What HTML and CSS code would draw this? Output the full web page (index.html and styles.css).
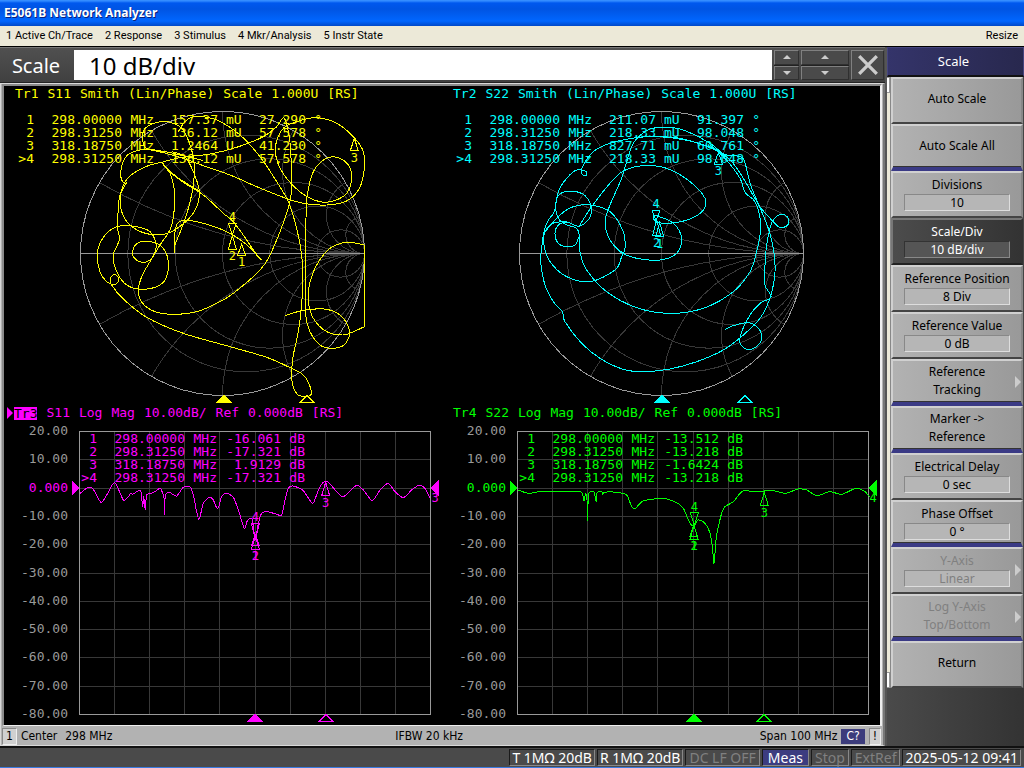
FILE: index.html
```html
<!DOCTYPE html>
<html lang="en">
<head>
<meta charset="utf-8">
<title>E5061B Network Analyzer</title>
<link rel="stylesheet" href="styles.css">
</head>
<body>
<div class="app">
  <header class="titlebar"><h1>E5061B Network Analyzer</h1></header>
  <nav class="menubar">
    <button>1 Active Ch/Trace</button>
    <button>2 Response</button>
    <button>3 Stimulus</button>
    <button>4 Mkr/Analysis</button>
    <button>5 Instr State</button>
    <button class="resize">Resize</button>
  </nav>

  <div class="workspace">
    <main class="main">
      <form class="entry">
        <label for="entry-value">Scale</label>
        <input id="entry-value" type="text" value="10 dB/div">
        <div class="spinner">
          <button type="button" aria-label="Step up"><i class="up"></i></button>
          <button type="button" aria-label="Step down"><i class="down"></i></button>
        </div>
        <div class="spinner wide">
          <button type="button" aria-label="Large step up"><i class="up"></i></button>
          <button type="button" aria-label="Large step down"><i class="down"></i></button>
        </div>
        <button type="button" class="close" aria-label="Close">
          <svg viewBox="0 0 20 20"><path d="M2 2 L18 18 M18 2 L2 18"/></svg>
        </button>
      </form>

      <section class="channel">
        <div class="screen">
          <article class="trace yellow">
            <h2><span>Tr1</span> <span>S11</span> <span>Smith</span> <span>(Lin/Phase)</span> <span>Scale</span> <span>1.000U</span> <span>[RS]</span></h2>
            <div class="plot">
              <svg id="tr1" viewBox="0 0 438 303"></svg>
              <table class="markers polar">
                <tr><td>1</td><td>298.00000</td><td>MHz</td><td>157.37</td><td>mU</td><td>27.290</td><td>°</td></tr>
                <tr><td>2</td><td>298.31250</td><td>MHz</td><td>136.12</td><td>mU</td><td>57.578</td><td>°</td></tr>
                <tr><td>3</td><td>318.18750</td><td>MHz</td><td>1.2464</td><td>U</td><td>41.230</td><td>°</td></tr>
                <tr><td>&gt;4</td><td>298.31250</td><td>MHz</td><td>136.12</td><td>mU</td><td>57.578</td><td>°</td></tr>
              </table>
            </div>
          </article>
          <article class="trace cyan">
            <h2><span>Tr2</span> <span>S22</span> <span>Smith</span> <span>(Lin/Phase)</span> <span>Scale</span> <span>1.000U</span> <span>[RS]</span></h2>
            <div class="plot">
              <svg id="tr2" viewBox="0 0 438 303"></svg>
              <table class="markers polar">
                <tr><td>1</td><td>298.00000</td><td>MHz</td><td>211.07</td><td>mU</td><td>91.397</td><td>°</td></tr>
                <tr><td>2</td><td>298.31250</td><td>MHz</td><td>218.33</td><td>mU</td><td>98.048</td><td>°</td></tr>
                <tr><td>3</td><td>318.18750</td><td>MHz</td><td>827.71</td><td>mU</td><td>60.761</td><td>°</td></tr>
                <tr><td>&gt;4</td><td>298.31250</td><td>MHz</td><td>218.33</td><td>mU</td><td>98.048</td><td>°</td></tr>
              </table>
            </div>
          </article>
          <article class="trace magenta">
            <h2 class="active"><span>Tr3</span> <span>S11</span> <span>Log</span> <span>Mag</span> <span>10.00dB/</span> <span>Ref</span> <span>0.000dB</span> <span>[RS]</span></h2>
            <div class="plot">
              <svg id="tr3" viewBox="0 0 438 303"></svg>
              <table class="markers">
                <tr><td>1</td><td>298.00000</td><td>MHz</td><td>-16.061</td><td>dB</td></tr>
                <tr><td>2</td><td>298.31250</td><td>MHz</td><td>-17.321</td><td>dB</td></tr>
                <tr><td>3</td><td>318.18750</td><td>MHz</td><td>1.9129</td><td>dB</td></tr>
                <tr><td>&gt;4</td><td>298.31250</td><td>MHz</td><td>-17.321</td><td>dB</td></tr>
              </table>
            </div>
          </article>
          <article class="trace green">
            <h2><span>Tr4</span> <span>S22</span> <span>Log</span> <span>Mag</span> <span>10.00dB/</span> <span>Ref</span> <span>0.000dB</span> <span>[RS]</span></h2>
            <div class="plot">
              <svg id="tr4" viewBox="0 0 438 303"></svg>
              <table class="markers">
                <tr><td>1</td><td>298.00000</td><td>MHz</td><td>-13.512</td><td>dB</td></tr>
                <tr><td>2</td><td>298.31250</td><td>MHz</td><td>-13.218</td><td>dB</td></tr>
                <tr><td>3</td><td>318.18750</td><td>MHz</td><td>-1.6424</td><td>dB</td></tr>
                <tr><td>&gt;4</td><td>298.31250</td><td>MHz</td><td>-13.218</td><td>dB</td></tr>
              </table>
            </div>
          </article>
        </div>
        <div class="stimulus">
          <span class="chan">1</span>
          <span class="center"><span>Center</span><span>298 MHz</span></span>
          <span class="ifbw">IFBW 20 kHz</span>
          <span class="span">Span 100 MHz</span>
          <span class="cal">C?</span>
          <span class="chan">!</span>
        </div>
      </section>
    </main>

    <aside class="softkeys">
      <h2>Scale</h2>
      <div class="keyarea">
        <div class="scroller"><i></i><i></i></div>
        <div class="keys">
          <button>Auto Scale</button>
          <button class="sep">Auto Scale All</button>
          <button>Divisions<b>10</b></button>
          <button class="selected">Scale/Div<b>10 dB/div</b></button>
          <button>Reference Position<b>8 Div</b></button>
          <button>Reference Value<b>0 dB</b></button>
          <button class="sep more">Reference<br>Tracking</button>
          <button class="sep">Marker -&gt;<br>Reference</button>
          <button>Electrical Delay<b>0 sec</b></button>
          <button class="sep">Phase Offset<b>0 °</b></button>
          <button class="more" disabled>Y-Axis<b>Linear</b></button>
          <button class="sep more" disabled>Log Y-Axis<br>Top/Bottom</button>
          <button>Return</button>
        </div>
      </div>
    </aside>
  </div>

  <footer class="status">
    <span>T 1MΩ 20dB</span>
    <span>R 1MΩ 20dB</span>
    <span class="off">DC LF OFF</span>
    <span class="on">Meas</span>
    <span class="off">Stop</span>
    <span class="off">ExtRef</span>
    <span>2025-05-12 09:41</span>
  </footer>
</div>
<script src="plots.js"></script>
</body>
</html>
```

FILE: styles.css
```css
* { box-sizing: border-box; }
body {
  margin: 0;
  background: #404040;
  font-family: "DejaVu Sans Condensed", "DejaVu Sans", sans-serif;
}
button { font: inherit; color: inherit; border: 0; padding: 0; background: none; }
h1, h2 { margin: 0; font-weight: normal; }

.app { display: flex; flex-direction: column; min-height: 100vh; border-bottom: 2px solid #3a7ae0; }

.titlebar {
  height: 26px;
  padding: 0 4px;
  background: linear-gradient(#3a92ff 0, #2f88ff 1px, #0058ee 3px, #0054e3 9px, #0066ff 21px, #0048c8 26px);
}
.titlebar h1 {
  font: bold 12px/26px "Noto Sans", sans-serif;
  color: #fff;
  text-shadow: 1px 1px #0a1f7a;
}

.menubar {
  display: flex;
  gap: 12px;
  height: 20px;
  padding: 0 6px;
  background: #ece9d8;
  color: #000;
  font-family: Roboto, sans-serif;
  font-size: 11px;
  line-height: 18px;
}
.menubar .resize { margin-left: auto; }

.workspace { display: flex; flex: 1; border-top: 1px solid #000; background: #b2b2b2; }
.main { flex: 1; display: flex; flex-direction: column; min-width: 0; }

.entry {
  display: flex;
  gap: 2px;
  height: 36px;
  padding: 2px 1px 2px 0;
  border-top: 1px solid #777;
  border-bottom: 1px solid #222;
  background: linear-gradient(#505050, #404040);
}
.entry label { width: 72px; text-align: center; font-family: "Noto Sans", sans-serif; font-size: 20px; line-height: 32px; color: #fff; }
.entry input {
  flex: 1;
  min-width: 0;
  border: 0;
  padding: 0 15px;
  background: #fff;
  color: #000;
  font-family: "Noto Sans", sans-serif;
  font-size: 24px;
}
.spinner { display: flex; flex-direction: column; gap: 1px; width: 25px; background: #222; }
.spinner.wide { width: 48px; }
.spinner button, .close {
  flex: 1;
  display: flex;
  align-items: center;
  justify-content: center;
  border: 1px solid;
  border-color: #808080 #303030 #303030 #808080;
  background: #4a4a4a;
}
.spinner i { border: 4px solid transparent; }
.spinner .up { border-top: 0; border-bottom-color: #ccc; }
.spinner .down { border-bottom: 0; border-top-color: #ccc; }
.close { flex: 0 0 33px; }
.close svg { width: 22px; height: 22px; fill: none; stroke: #ccc; stroke-width: 3; }

.channel {
  flex: 1;
  display: flex;
  flex-direction: column;
  border: 1px solid #d8d8d8;
  border-right: 2px solid #777;
  background: #b2b2b2;
}
.screen {
  display: grid;
  grid-template-columns: 1fr 1fr;
  margin: 0 1px 0 1px;
  padding-bottom: 1px;
  border: 2px solid #8a8a8a;
  border-bottom: 1px solid #eee;
  border-right: 2px solid #eee;
  background: #000;
  font-family: "DejaVu Sans Mono", monospace;
  font-size: 13px;
}
.yellow { color: #ff0; }
.cyan { color: #0ff; }
.magenta { color: #f0f; }
.green { color: #0f0; }
.trace h2 { display: flex; gap: 9px; height: 16px; padding-left: 11px; font-size: 13px; line-height: 16px; white-space: nowrap; }
.trace h2.active { padding-left: 3px; }
.trace h2.active::before { content: ""; align-self: center; margin-right: -8px; border: 6px solid transparent; border-left-color: #f0f; border-right: 0; }
.trace h2.active span:first-child { height: 13px; margin-top: 2px; line-height: 13px; background: #f0f; color: #000; }
.plot { position: relative; }
.plot svg { display: block; width: 100%; height: auto; shape-rendering: crispEdges; fill: none; stroke-width: 1; }
.plot svg text { stroke: none; fill: currentColor; font-size: 12px; text-anchor: middle; }
.plot svg text.scale { fill: #999; font-size: 13px; text-anchor: end; }
.plot svg text.ref { fill: currentColor; }
.plot .grid { stroke: #383838; }
.plot .frame { stroke: #999; }
.plot .line { stroke: currentColor; }
.plot .solid { stroke: currentColor; fill: currentColor; }

.markers { position: absolute; top: 11px; left: 74px; border-collapse: collapse; line-height: 13px; font-size: 13px; }
.markers.polar { left: 11px; }
.markers td { padding: 0; width: 64px; text-align: right; white-space: nowrap; }
.markers td:nth-child(1) { width: 19px; }
.markers td:nth-child(2) { width: 88px; }
.markers td:nth-child(3) { width: 32px; }
.markers td:nth-child(5) { width: 24px; }
.polar td:nth-child(5) { width: 32px; padding-left: 8px; text-align: left; }
.polar td:nth-child(6) { width: 56px; }
.polar td:nth-child(7) { width: 16px; }

.stimulus {
  flex: 1;
  display: flex;
  align-items: center;
  gap: 4px;
  padding: 2px 2px 0 1px;
  min-height: 18px;
  color: #000;
  font-size: 12px;
  line-height: 15px;
}
.chan { padding: 0 3px; border: 1px solid; border-color: #888 #eee #eee #888; background: #d0d0d0; }
.stimulus .center { flex: 1; display: flex; gap: 8px; }
.stimulus .span { flex: 1; text-align: right; }
.cal { padding: 0 5px; background: #3c3c7c; color: #fff; }

.softkeys { width: 139px; border-left: 2px solid #555; background: linear-gradient(90deg, #4a4a4a, #333); font-family: "Noto Sans", sans-serif; }
.softkeys h2 { height: 30px; padding-right: 4px; border: 1px solid #45457e; border-bottom: 2px solid #111; background: linear-gradient(90deg, #34346a, #28284e); color: #fff; text-align: center; font-size: 13px; line-height: 26px; }
.keyarea { display: flex; }
.scroller { display: flex; flex-direction: column; justify-content: space-between; width: 4px; background: #ece9d8; border-right: 1px solid #888; }
.scroller i { height: 16px; border: 1px solid #999; border-left: 0; background: #fff; }
.keys { flex: 1; display: flex; flex-direction: column; border-right: 1px solid #444; }
.keys button {
  position: relative;
  height: 47px;
  padding-bottom: 3px;
  border: 2px solid;
  border-color: #d0d0d0 #888 #444 #d0d0d0;
  background: linear-gradient(90deg, #b2b2b2, #999);
  color: #000;
  font-size: 12px;
  line-height: 18px;
}
.keys .sep { padding-bottom: 1px; border-bottom: 4px solid #3a3a85; box-shadow: inset 0 -1px #333; }
.keys b { display: block; height: 17px; margin: 0 11px; border: 1px solid; border-color: #888 #ddd #ddd #888; background: #b6b6b6; font-weight: normal; line-height: 15px; }
.keys .selected { border-color: #777 #333 #222 #777; background: linear-gradient(90deg, #4c4c4c, #333); color: #fff; }
.keys .selected b { border-color: #333 #888 #888 #333; background: #555; }
.keys button:disabled { color: #808080; }
.keys .more::after { content: ""; position: absolute; right: 0; top: 15px; border: 6px solid transparent; border-left-color: #ccc; border-right: 0; }

.status {
  display: flex;
  justify-content: flex-end;
  gap: 2px;
  height: 21px;
  padding: 1px 3px;
  border-top: 2px solid #111;
  background: #4a4a4a;
  color: #fff;
  font-family: "Noto Sans", sans-serif;
  font-size: 14px;
  line-height: 15px;
}
.status span { padding: 0 2px; border: 1px solid; border-color: #1a1a1a #888 #888 #1a1a1a; }
.status .off { padding: 0 3px; color: #808080; }
.status .on { padding: 0 5px; background: #3c3c80; }
```

FILE: plots.js
```js
const NS = "http://www.w3.org/2000/svg";

function add(parent, tag, attrs, text) {
  const node = document.createElementNS(NS, tag);
  for (const key in attrs) node.setAttribute(key, attrs[key]);
  if (text !== undefined) node.textContent = text;
  parent.appendChild(node);
  return node;
}

// Sampled points are stored in thirds of a display unit.
const at = (o, u, v) => [o[0] + u / 3, o[1] + v / 3];

// Catmull-Rom spline through the samples.
function curve(svg, origin, text, tension) {
  const p = text.trim().split(/\s+/).map(s => at(origin, ...s.split(",").map(Number)));
  let d = "M" + p[0].map(n => n.toFixed(2));
  for (let i = 0; i < p.length - 1; i++) {
    const a = p[i - 1] || p[i], b = p[i], c = p[i + 1], e = p[i + 2] || c;
    const k = tension;
    d += "C" + [b[0] + (c[0] - a[0]) * k, b[1] + (c[1] - a[1]) * k,
      c[0] - (e[0] - b[0]) * k, c[1] - (e[1] - b[1]) * k, c[0], c[1]].map(n => n.toFixed(2));
  }
  add(svg, "path", { class: "line", d });
}

// Marker triangle: tip on the trace, base above or below it.
function marker(svg, origin, u, tip, base, label) {
  const [x, y] = at(origin, u, tip), yb = at(origin, u, base)[1];
  add(svg, "path", { class: "line", d: `M${x} ${y}L${x - 4} ${yb}H${x + 4}Z` });
  if (label) add(svg, "text", { x, y: base > tip ? yb + 11 : yb - 2 }, label);
}

function stimulusMarks(svg, solid, open) {
  add(svg, "path", { class: "solid", d: `M${solid} 293L${solid + 7} 300H${solid - 7}Z` });
  add(svg, "path", { class: "line", d: `M${open} 293.5L${open + 7} 300.5H${open - 7}Z` });
}

function smithGrid(svg, cx) {
  const cy = 151.5, R = 142, id = svg.id + "-clip";
  add(add(svg, "clipPath", { id }), "circle", { cx, cy, r: R });
  const g = add(svg, "g", { class: "grid", "clip-path": `url(#${id})` });
  for (const r of [0.2, 0.5, 1, 2, 5])
    add(g, "circle", { cx: cx + R * r / (1 + r), cy, r: R / (1 + r) });
  for (const deg of [30, 60, 90, 120, 150, 165]) {
    const k = R / Math.tan(deg * Math.PI / 360);
    for (const s of [-1, 1]) add(g, "circle", { cx: cx + R, cy: cy + s * k, r: k });
  }
  add(svg, "circle", { class: "frame", cx, cy, r: R });
  add(svg, "path", { class: "frame", d: `M${cx - R} ${cy}H${cx + R}` });
}

function logGrid(svg) {
  let d = "";
  for (let i = 1; i < 10; i++) {
    d += `M${Math.round(75 + i * 35.1) + 0.5} 10.5V293.5`;
    d += `M75.5 ${Math.round(10 + i * 28.3) + 0.5}H426.5`;
  }
  add(svg, "path", { class: "grid", d });
  add(svg, "rect", { class: "frame", x: 75.5, y: 10.5, width: 351, height: 283 });
  for (let i = 0; i <= 10; i++) {
    const v = 20 - i * 10;
    add(svg, "text", { class: v ? "scale" : "scale ref", x: 64, y: Math.round(10 + i * 28.3) + 4 },
      v ? v.toFixed(2) : "0.000");
  }
  add(svg, "path", { class: "solid", d: "M75 67L68 60V74Z M427 67L434 60V74Z" });
}

const tr1 = document.getElementById("tr1"), o1 = [66, -17];
smithGrid(tr1, 218.5);
[
  "645,692 690,678 720,673 770,673 810,690 835,725 837,755 818,783 785,790 750,780 720,740 707,690 707,600 706,505 708,400 712,330 730,260 765,222 800,217 835,240 845,280 830,325 790,348 750,350 700,328 650,280 622,230 617,180 640,130 680,110 740,98 800,115 850,155 880,200 883,250 868,310 830,348 770,360 700,355 640,337 560,305 480,270 400,242 340,220 280,203 230,190 218,165 225,130 270,110 310,115 340,135 360,180 372,230 370,300 355,370 335,430 315,480 312,505",
  "275,232 330,218 420,207 500,187 580,155 620,125 640,98 652,125 661,180 664,260 663,330 653,375 630,440 600,510 570,555 490,625 440,655 380,680 310,688 255,680 218,655 205,620 215,575 240,530 270,480 302,430 313,370 312,310 300,265 275,232",
  "325,140 345,110 375,95 440,105 510,150 570,215 620,290 655,350 680,430 695,510 698,580 695,660 685,740 670,810 665,860 668,900 685,930 720,932 722,910 700,870 660,848 590,817 480,785 340,745 230,697 160,642 125,600 121,580 135,568 147,583 135,598 110,590 90,560 82,510 90,475 115,440 150,423 200,425 240,440 258,475 255,500 240,525 215,532 190,515 192,487 210,471 250,472 280,490 295,530 288,580 260,605 215,613 170,600 140,560 130,510 148,465 143,430 145,370 150,330 170,292",
  "150,260 155,285 165,297",
  "152,260 160,228 180,205 230,193 300,203 400,227",
  "275,232 235,242 190,265 165,290 152,330 155,380 180,420 230,446 290,446 345,412 378,370 388,320 372,265 345,215 305,200",
  "275,232 330,285 400,330 460,385 490,410 530,465 560,510 575,525",
  "275,232 300,262 350,295 388,318",
  "312,505 315,440 325,412 350,406 400,415 470,440 525,475 560,508",
  "883,480 830,472 780,490 740,540 718,600 715,650 730,700 770,740 820,750 855,738 883,725"
].forEach(t => curve(tr1, o1, t, 1 / 6));
curve(tr1, o1, "883,725 883,480", 0);
marker(tr1, o1, 515, 478, 511, "1");
marker(tr1, o1, 487, 452, 493, "2");
marker(tr1, o1, 853, 160, 197, "3");
marker(tr1, o1, 487, 450, 415, "4");
stimulusMarks(tr1, 220, 303);

const tr2 = document.getElementById("tr2"), o2 = [68, -17];
smithGrid(tr2, 219.5);
[
  "645,733 670,722 715,713 745,730 755,755 745,780 715,794 690,775 695,740 720,690 750,655 783,636 765,600 765,540 770,480 780,430 790,405 815,387 835,400 833,420 810,428 790,410 750,365 700,280 665,230 620,195 540,168 450,155 380,158 300,175 250,200 220,240 215,265 227,272 228,260 200,255 170,280 145,320 133,380 115,405 102,440 95,490 92,530 105,600 130,650 157,680 165,710 215,775 270,820 340,853 400,860 480,852 560,830 640,795 700,750 750,700 780,640 795,560 790,490 775,430 755,380 722,300 702,225 680,213 650,210 580,180 510,160 450,155",
  "645,215 600,175 510,132 440,128 405,140 370,175 350,230 335,280 300,360 285,410 295,455 320,490 345,508",
  "600,180 645,220 690,280 705,322 735,350 750,400 750,450 740,500 720,560 670,620 580,670 480,685 380,668 290,620 230,555 210,500 209,455 195,480 170,485 145,475 135,445 147,418 175,411",
  "105,440 150,390 190,365 240,360 300,380 340,440 345,490 335,515 315,555 240,590 170,575 120,530 102,480 105,440 130,415 170,411 207,424 238,400 243,365 225,332 190,319 150,327 137,360 145,400 170,420 200,430 209,455",
  "207,424 245,365 300,295 340,258 400,242 470,250 540,290 585,340 580,375 540,402 480,415 445,412 430,400 440,393 490,415 515,460 500,505 450,525 380,520 330,500 300,465"
].forEach(t => curve(tr2, o2, t, 1 / 6));
marker(tr2, o2, 440, 405, 452, "");
marker(tr2, o2, 449, 412, 455, "1");
marker(tr2, o2, 440, 405, 452, "2");
marker(tr2, o2, 625, 203, 237, "3");
marker(tr2, o2, 438, 408, 375, "4");
stimulusMarks(tr2, 220, 303);

const tr3 = document.getElementById("tr3"), o3 = [-4, -21];
logGrid(tr3);
curve(tr3, o3, "240,280 265,262 280,268 303,307 320,285 340,250 350,255 370,300 385,290 392,280 398,283 415,272 423,275 428,320 431,290 436,330 440,285 460,278 480,265 488,280 493,300 494,345 496,285 510,278 530,288 550,262 570,260 580,285 596,358 610,310 628,292 640,300 653,327 665,290 680,280 700,292 715,330 733,385 742,362 755,355 760,380 766,420 775,370 785,340 800,335 825,341 845,345 855,300 865,265 880,258 910,272 938,310 955,270 970,247 985,247 1025,290 1045,278 1070,256 1090,270 1117,302 1140,270 1165,250 1185,275 1210,293 1235,270 1257,256 1275,265 1290,295", 0.12);
marker(tr3, o3, 766, 405, 437, "");
marker(tr3, o3, 766, 410, 447, "1");
marker(tr3, o3, 766, 410, 447, "2");
marker(tr3, o3, 977, 247, 287, "3");
marker(tr3, o3, 766, 418, 370, "4");
add(tr3, "text", { x: 431, y: 81 }, "3");
stimulusMarks(tr3, 251, 322);

const tr4 = document.getElementById("tr4"), o4 = [8, -21];
logGrid(tr4);
curve(tr4, o4, "205,270 235,280 275,274 310,276 365,274 395,277 402,302 407,280 411,300 412,362 415,290 417,278 432,276 438,305 441,278 455,275 458,284 463,277 500,277 530,285 545,320 555,326 575,305 590,300 640,295 680,308 700,325 715,360 725,376 733,376 745,360 765,370 780,400 787,440 792,490 798,420 803,390 815,340 825,320 850,305 870,280 885,271 915,276 965,271 1005,280 1045,267 1070,270 1100,287 1140,275 1175,283 1218,265 1245,275 1258,290", 0.12);
marker(tr4, o4, 731, 376, 410, "");
marker(tr4, o4, 732, 376, 417, "1");
marker(tr4, o4, 732, 376, 417, "2");
marker(tr4, o4, 943, 277, 317, "3");
marker(tr4, o4, 733, 374, 338, "4");
add(tr4, "text", { x: 431, y: 81 }, "4");
stimulusMarks(tr4, 252, 322);
```
